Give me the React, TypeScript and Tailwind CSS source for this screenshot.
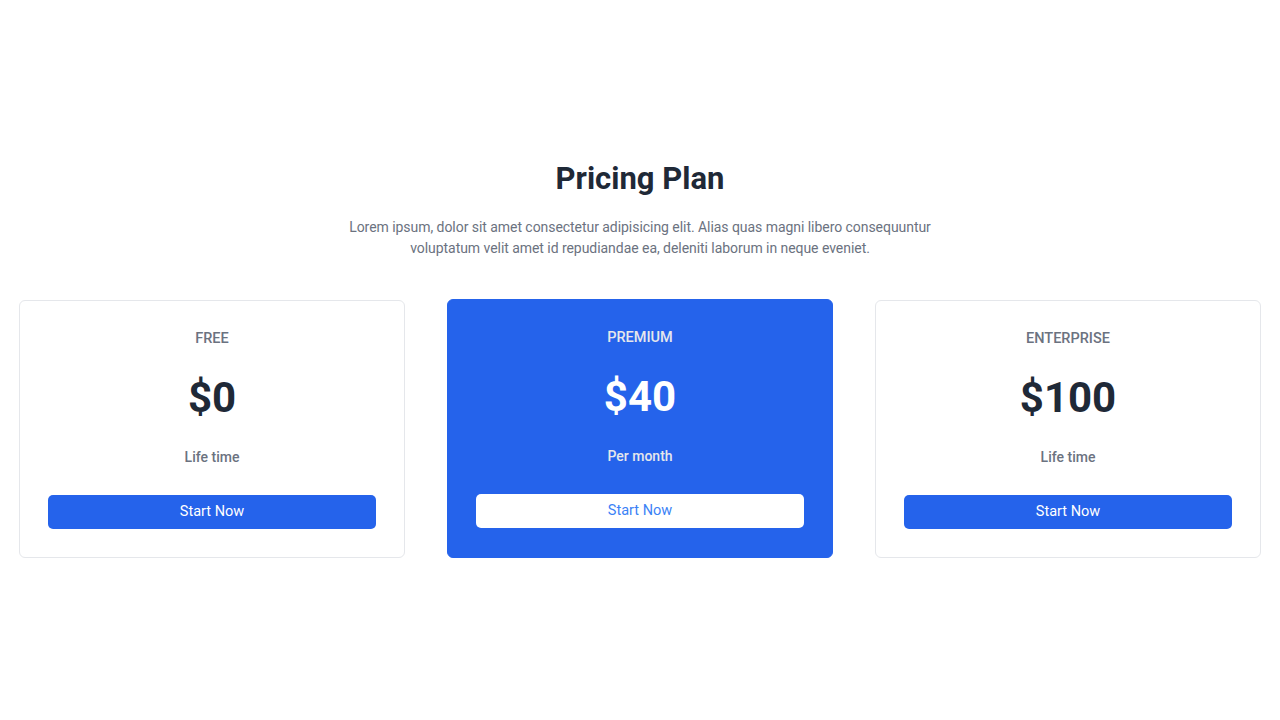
import React from "react";

type Plan = {
  name: string;
  price: string;
  period: string;
  featured?: boolean;
};

const plans: Plan[] = [
  { name: "FREE", price: "$0", period: "Life time" },
  { name: "PREMIUM", price: "$40", period: "Per month", featured: true },
  { name: "ENTERPRISE", price: "$100", period: "Life time" },
];

export default function App() {
  return (
    <main className="min-h-screen bg-white flex items-center font-['Roboto','Liberation_Sans',sans-serif]">
      <section className="w-full px-[19px] -mt-[2px]">
        {/* Heading */}
        <div className="text-center">
          <h1 className="text-[31px] leading-[36px] font-bold text-[#1f2937]">Pricing Plan</h1>
          <p className="max-w-[600px] mx-auto mt-[20px] text-[14px] leading-[21px] tracking-[-0.05px] text-[#6b7280]">
            Lorem ipsum, dolor sit amet consectetur adipisicing elit. Alias quas magni libero consequuntur
            voluptatum velit amet id repudiandae ea, deleniti laborum in neque eveniet.
          </p>
        </div>

        {/* Plans */}
        <div className="grid grid-cols-3 gap-[42px] mt-[41px]">
          {plans.map((plan) => (
            <div
              key={plan.name}
              className={
                plan.featured
                  ? "flex flex-col items-center gap-7 p-7 -mt-px rounded-md bg-[#2563eb] border border-[#2563eb]"
                  : "flex flex-col items-center gap-7 p-7 rounded-md bg-white border border-[#e5e7eb]"
              }
            >
              <h2
                className={
                  plan.featured
                    ? "text-[14.5px] leading-5 font-medium text-[#e5e7eb]"
                    : "text-[14.5px] leading-5 font-medium text-[#6b7280]"
                }
              >
                {plan.name}
              </h2>
              <p
                className={
                  plan.featured
                    ? "text-[42px] leading-[42px] font-bold text-white"
                    : "text-[42px] leading-[42px] font-bold text-[#1f2937]"
                }
              >
                {plan.price}
              </p>
              <p
                className={
                  plan.featured
                    ? "text-sm leading-5 font-medium text-[#e5e7eb]"
                    : "text-sm leading-5 font-medium text-[#6b7280]"
                }
              >
                {plan.period}
              </p>
              <button
                className={
                  plan.featured
                    ? "w-full h-[34px] rounded-[5px] text-[14.5px] bg-white text-[#3b82f6]"
                    : "w-full h-[34px] rounded-[5px] text-[14.5px] bg-[#2563eb] text-white"
                }
              >
                Start Now
              </button>
            </div>
          ))}
        </div>
      </section>
    </main>
  );
}
